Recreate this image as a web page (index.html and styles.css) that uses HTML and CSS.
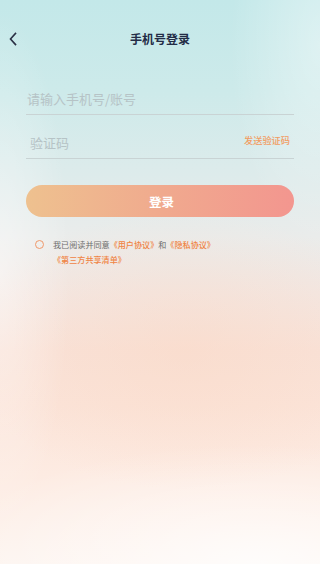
FILE: index.html
```html
<!DOCTYPE html>
<html lang="zh">
<head>
<meta charset="utf-8">
<link rel="stylesheet" href="styles.css">
</head>
<body>
<div class="page">
  <header class="nav">
    <svg class="back" width="10" height="14" viewBox="0 0 10 14"><path d="M7.5 1.5 L2.5 7 L7.5 12.5" fill="none" stroke="#2a3045" stroke-width="1.6" stroke-linecap="square"/></svg>
    <h1 class="title">手机号登录</h1>
  </header>
  <div class="form">
    <div class="field">
      <span class="placeholder">请输入手机号/账号</span>
    </div>
    <div class="field field-code">
      <span class="placeholder code">验证码</span>
      <span class="send">发送验证码</span>
    </div>
    <button class="login">登录</button>
    <div class="agree">
      <span class="radio"></span>
      <p class="agree-text">我已阅读并同意<a>《用户协议》</a>和<a>《隐私协议》</a><br><a>《第三方共享清单》</a></p>
    </div>
  </div>
</div>
</body>
</html>
```
FILE: styles.css
```css
* { box-sizing: border-box; margin: 0; padding: 0; }
html, body { width: 320px; height: 564px; overflow: hidden; }
body {
  font-family: "Noto Sans CJK SC", "Noto Sans", sans-serif;
}
.page {
  width: 320px;
  height: 564px;
  background:
    radial-gradient(ellipse 70px 260px at 0% 48%, rgba(255,255,255,0.45), rgba(255,255,255,0)),
    radial-gradient(ellipse 90px 200px at 100% 8%, rgba(255,255,255,0.4), rgba(255,255,255,0)),
    radial-gradient(ellipse 220px 140px at 58% 62%, rgba(250,215,195,0.45), rgba(250,215,195,0)),
    radial-gradient(ellipse 320px 120px at 80% 100%, rgba(255,255,255,0.75), rgba(255,255,255,0)),
    linear-gradient(180deg, #c3e8e9 0%, #cdeaea 16%, #dcebeb 30%, #eaeceb 42%, #f3e7e2 52%, #f9e2d8 62%, #fbe4d9 72%, #fdebe2 84%, #fdf4ef 100%);
}
.nav {
  height: 77px;
  display: flex;
  align-items: center;
  justify-content: center;
  position: relative;
  padding-bottom: 1px;
}
.back {
  position: absolute;
  left: 8px;
  top: 32px;
}
.title {
  font-size: 12px;
  font-weight: 700;
  color: #232c46;
}
.form {
  padding: 0 26px;
  display: flex;
  flex-direction: column;
}
.field {
  height: 38px;
  border-bottom: 1px solid #c9d3d4;
  display: flex;
  align-items: flex-end;
  justify-content: space-between;
  padding: 0 0 7px 1px;
}
.field-code {
  height: 44px;
}
.placeholder {
  font-size: 13px;
  line-height: 16px;
  color: #b6c3c6;
}
.placeholder.code { padding-left: 3px; }
.send {
  font-size: 9.2px;
  line-height: 12px;
  font-weight: 500;
  color: #f29c62;
  padding-right: 4px;
  margin-bottom: 5px;
}
.login {
  margin-top: 26px;
  height: 32px;
  border: none;
  border-radius: 16px;
  background: linear-gradient(90deg, #eec18f 0%, #f0aa8e 50%, #f3968f 100%);
  color: #fff;
  font-family: inherit;
  font-size: 12.5px;
  font-weight: 700;
  padding-left: 3px;
}
.agree {
  margin-top: 20px;
  display: flex;
  align-items: flex-start;
  padding-left: 9px;
}
.radio {
  width: 9px;
  height: 9px;
  border: 1px solid #f0996a;
  border-radius: 50%;
  margin-top: 3px;
  flex: none;
}
.agree-text {
  margin-left: 9px;
  font-size: 8.1px;
  line-height: 15px;
  color: #6d6d6d;
}
.agree-text a { color: #f08443; font-weight: 500; }
```
